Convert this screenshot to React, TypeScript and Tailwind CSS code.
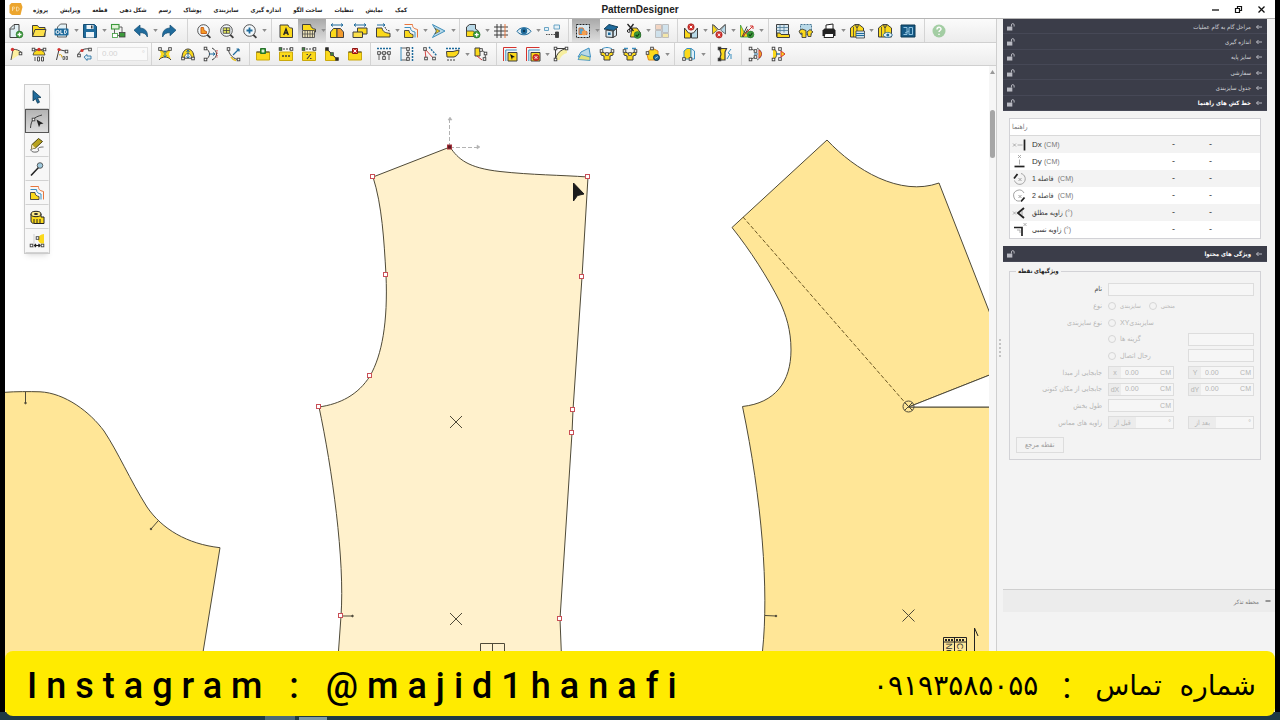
import { ReactNode, useState } from 'react'

type Tool = { icon: string; label: string; split?: boolean; on?: boolean; off?: boolean }
type ToolGroup = { tools: Tool[]; gap: string }

const Y = '#fbd91b'
const K = '#3f3f3f'
const B = '#1f6b9c'
const G = '#3c9a3c'
const R = '#d3332f'

const dot = (x: number, y: number, fill = '#fff') => (
  <rect key={`${x}-${y}`} x={x - 1.3} y={y - 1.3} width="2.6" height="2.6" fill={fill} stroke={K} strokeWidth="0.9" />
)

const plus = (x: number, y: number) => (
  <g>
    <circle cx={x} cy={y} r="3.4" fill={G} stroke="#26702a" strokeWidth="0.6" />
    <path d={`M${x - 2} ${y}h4M${x} ${y - 2}v4`} stroke="#fff" strokeWidth="1.3" />
  </g>
)

const check = (x: number, y: number) => (
  <g>
    <circle cx={x} cy={y} r="3.4" fill={G} stroke="#26702a" strokeWidth="0.6" />
    <path d={`M${x - 1.8} ${y}l1.4 1.5l2.2-2.8`} stroke="#123f14" fill="none" strokeWidth="1.1" />
  </g>
)

const cross = (x: number, y: number) => (
  <g>
    <circle cx={x} cy={y} r="3.2" fill={R} stroke="#9c1c1a" strokeWidth="0.6" />
    <path d={`M${x - 1.3} ${y - 1.3}l2.6 2.6m0-2.6l-2.6 2.6`} stroke="#fff" strokeWidth="1" />
  </g>
)

const lens = (
  <g>
    <path d="M11 11.5l3.4 3.4" stroke={K} strokeWidth="1.8" />
    <circle cx="7.5" cy="7.5" r="5.8" fill="#f3f8fb" stroke={K} strokeWidth="0.9" />
  </g>
)

const icons: Record<string, ReactNode> = {
  new: (
    <g>
      <path d="M2 14.5V5.5L6 1.5h5v13z" fill="#e3f1f6" stroke={K} />
      <path d="M2 6h4.3V1.7" fill="none" stroke={K} strokeWidth="0.8" />
      {plus(11.5, 11.5)}
    </g>
  ),
  open: (
    <g>
      <path d="M1.5 13.5V2.5h5l1.5 2h6v9z" fill={Y} stroke={K} />
      <path d="M1.5 13.5L4 6.5h11l-2 7z" fill="#fce04b" stroke={K} />
    </g>
  ),
  old: (
    <g>
      <path d="M3.5 14V4l3-3h6v13z" fill="#e3f1f6" stroke={K} strokeWidth="0.8" />
      <rect x="0.5" y="5.5" width="14" height="7" rx="1" fill={B} />
      <circle cx="3.6" cy="9" r="1.6" fill="none" stroke="#fff" />
      <path d="M6.8 7v3.6h2M10.6 7v3.6c2.6.3 2.6-3.9 0-3.6z" fill="none" stroke="#fff" strokeWidth="0.9" />
    </g>
  ),
  save: (
    <g>
      <path d="M1.5 1.5h11l2 2v11h-13z" fill={B} stroke="#164e73" />
      <path d="M4.5 2h7v4h-7z" fill="#eef5f9" />
      <path d="M9 2.5h1.5v3H9z" fill={K} />
      <path d="M4 9h8v5.5H4z" fill="#eef5f9" />
    </g>
  ),
  tree: (
    <g stroke={K} strokeWidth="0.8">
      <path d="M4.5 5.5v7h5M8 4h4v5" fill="none" />
      <rect x="1.5" y="1.5" width="7.5" height="4.5" fill="#e4f3da" stroke={G} strokeWidth="1.1" />
      <rect x="9.5" y="9.5" width="5.5" height="4.5" fill={G} />
      <rect x="2.5" y="10.5" width="5" height="4" fill="#fff" stroke={G} />
    </g>
  ),
  undo: <path d="M1 7.2L7 2v3c5 .2 8 3.2 7.4 9-1.4-3.2-3.7-4.4-7.4-4.3v3z" fill={B} stroke="#164e73" strokeWidth="0.7" />,
  redo: <path d="M15 7.2L9 2v3c-5 .2-8 3.2-7.4 9 1.4-3.2 3.7-4.4 7.4-4.3v3z" fill={B} stroke="#164e73" strokeWidth="0.7" />,
  zoomPiece: (
    <g>
      {lens}
      <path d="M5 10.5V4.5h2.5l.5 3 2.5 1v2z" fill="#f59a23" stroke="#c9631d" />
    </g>
  ),
  zoomAll: (
    <g>
      {lens}
      <path d="M4.2 4.8h6.6v5.5H4.2z" fill="#dfe35a" stroke={K} strokeWidth="0.8" />
      <path d="M4.2 7.5h6.6M7.5 4.8v5.5" stroke={K} strokeWidth="0.8" />
    </g>
  ),
  zoomIn: (
    <g>
      {lens}
      <path d="M4.5 7.5h6M7.5 4.5v6" stroke={B} strokeWidth="1.8" />
    </g>
  ),
  pieceA: (
    <g>
      <path d="M2 14.5V2h8c.5 2 1.5 3 4.500 3.200V14.500z" fill={Y} stroke={K} />
      <path d="M5.7 12L8 6l2.300 6M6.500 10h3" fill="none" stroke="#222" strokeWidth="1.400" />
    </g>
  ),
  calc: (
    <g>
      <path d="M1.5 7V1.5h8c.5 3 2 4.5 5 4.7V9H9" fill={Y} stroke={K} />
      <path d="M1.5 7.5h12v7h-12z" fill="#e9dfb6" stroke={K} strokeWidth="0.8" />
      <path d="M4 7.5v7M6.5 7.5v7M9 7.5v7M11.5 7.5v7M1.5 11h12" stroke={K} strokeWidth="0.7" />
    </g>
  ),
  mirror: (
    <g>
      <path d="M2 2h12M4 .5L2 2l2 1.5M12 .5L14 2l-2 1.5" fill="none" stroke={B} />
      <path d="M1.500 14.5V9l3-3.5H8v9z" fill={Y} stroke={K} />
      <path d="M14.500 14.5V9l-3-3.5H8v9z" fill="#f29b2e" stroke={K} />
    </g>
  ),
  move: (
    <g>
      <path d="M2 2h12M4 .5L2 2l2 1.5M12 .5L14 2l-2 1.5" fill="none" stroke={B} />
      <path d="M5.5 5h9.5v6H5.5z" fill={Y} stroke={K} />
      <path d="M1 9h9.5v5.5H1z" fill="#fce04b" stroke={K} />
    </g>
  ),
  extend: (
    <g>
      <path d="M2 2h8M8 .5L10 2 8 3.5" fill="none" stroke={B} />
      <path d="M1.5 14V5H7c.6 3.5 3 5 8 5.3V14z" fill={Y} stroke={K} />
      <path d="M10 4c.5 2.5 2 3.5 5 4" fill="none" stroke={K} strokeDasharray="1.5 1" />
    </g>
  ),
  seam: (
    <g fill="none">
      <path d="M1.5 1.5H9.5c0 3 1 4 5 5v8" stroke="#e7763d" />
      <path d="M1.5 4.500H7.500c0 3 1.500 4 4.500 4.500v5.500" stroke="#3b8fc0" />
      <path d="M1.5 14.500V7.500h4.500c0 2.500 1.500 3.500 4 4v3z" fill={Y} stroke={K} strokeWidth="0.900" />
    </g>
  ),
  chevron: (
    <g fill="none">
      <path d="M1.500 1.500L14 8 1.500 14.500l4-6.500z" fill="#b8d9e8" stroke="#3f8fbb" />
      <path d="M4 5.5L9 8l-5 2.8L5.5 8z" fill={Y} stroke={K} strokeWidth="0.6" />
    </g>
  ),
  addPiece: (
    <g>
      <path d="M1.5 13V4l3-2.5h6V6l3 2v5z" fill="#b8d9e8" stroke={K} />
      <path d="M1.5 13.5V8h7l2 3v2.5z" fill={Y} stroke={K} strokeWidth="0.8" />
      {plus(11.7, 11.7)}
    </g>
  ),
  grid: (
    <g fill="none" stroke={K}>
      <path d="M4 1v14M8 1v14M1 4h14M1 8h14M1 12h14" />
      <path d="M12 1v14" stroke="#e7763d" />
    </g>
  ),
  eye: (
    <g>
      <path d="M1 8.3C4 3.5 12 3.5 15 8.3 12 13 4 13 1 8.3z" fill="#dcebf3" stroke={B} />
      <circle cx="8" cy="8" r="3.2" fill={B} />
      <circle cx="8" cy="8" r="1.2" fill="#0d3853" />
    </g>
  ),
  link: (
    <g fill="none" stroke="#5b9cc0" strokeWidth="0.9">
      <path d="M0.5 4.5h4v3h-4zM10 2h5.500v4H10z" fill="#e5f1f7" />
      <path d="M2 11.500h9" stroke={K} strokeDasharray="1.5 1" />
      <path d="M11.500 9h3v5.500h-3z" fill={K} stroke={K} />
    </g>
  ),
  select: (
    <g>
      <rect x="1.5" y="1.5" width="13" height="13" fill="#d7e6ee" stroke="#222" strokeDasharray="2 1" />
      <path d="M4 11.5V5h4l1.5 3 2.5.8v2.7z" fill="#57a3cc" stroke="#e5722c" />
      <circle cx="9" cy="10" r="2.4" fill="#f6a04d" />
    </g>
  ),
  house: (
    <g>
      <path d="M1 6l5-4.5 9 2.5-4 3.5z" fill={B} stroke="#123f5c" />
      <path d="M3 7v7l7 .5V8zM10 8.5l3.5-3v7L10 14.5z" fill="#d6e7f0" stroke={K} />
      <path d="M5 9.5h2.6v2.5H5z" fill={B} />
    </g>
  ),
  cut: (
    <g>
      <path d="M4.5 14L6 5h5l3.5 5v4z" fill={Y} stroke={K} />
      <path d="M1.5 1l6 7M7.5 1L3 7" stroke="#222" strokeWidth="1.3" />
      <circle cx="2.8" cy="8" r="1.4" fill="none" stroke="#222" />
      {check(11.5, 12)}
    </g>
  ),
  layout: (
    <g stroke="#8b8b8b" strokeWidth="0.8">
      <path d="M1.5 1.5h6v5h-6z" fill="#f0bfa0" />
      <path d="M8.5 1.5h6v8h-6z" fill="#b9d7e8" />
      <path d="M1.5 7.5h6v7h-6z" fill="#b9d7e8" />
      <path d="M8.5 10.5h6v4h-6z" fill="#f5e07a" />
    </g>
  ),
  weld: (
    <g>
      <path d="M1.5 15V5l4 5h2v5z" fill={Y} stroke={K} />
      <path d="M14.5 15V5l-4 5h-2v5z" fill="#b8d9e8" stroke={K} />
      {cross(8, 4)}
    </g>
  ),
  unweld: (
    <g>
      <path d="M1.5 1.5L6.500 7 1.5 11z" fill={Y} stroke={K} strokeWidth="0.7" />
      <path d="M14.5 1.5L9.500 7l5 4z" fill="#b8d9e8" stroke={K} strokeWidth="0.7" />
      <path d="M2.5 1.5L8 7l6-5.5" fill="none" stroke={K} strokeWidth="0.8" />
      {cross(8, 11.8)}
    </g>
  ),
  compare: (
    <g fill="none">
      <path d="M1.500 14V2l3.500 7 8 5z" fill={Y} stroke={G} strokeWidth="0.8" />
      <path d="M3 14L8 3.5M4 14l5-8" stroke={K} />
      <path d="M4 13L14 3m0 0h-3m3 0v3" stroke={R} />
      {check(11.5, 11.5)}
    </g>
  ),
  marker: (
    <g>
      <path d="M1.5 1.5h12v12h-12z" fill="#d6e7f0" stroke={K} />
      <path d="M1.5 4.5h12M1.5 7.5h12M5 1.5v8M9 1.5v8" stroke="#4b7894" strokeWidth="0.8" />
      <path d="M2 14.5V10h3l1 1.5h8.5v3z" fill={Y} stroke={K} />
    </g>
  ),
  spread: (
    <g>
      <path d="M2.500 1.5h11v10h-11z" fill="#b8d9e8" stroke="#4b7894" strokeDasharray="2 1" />
      <path d="M1 8l3-2 4 1.500v7H4V10l-2 .5zM9 9l3-2.500 3 2.500-2 1.500v3h-3z" fill={Y} stroke={K} strokeWidth="0.9" />
    </g>
  ),
  print: (
    <g>
      <path d="M5 6V2l7-1v5" fill="#fff" stroke="#222" />
      <path d="M1.5 7.5l2-2H13l1.500 2V13h-13z" fill="#222" />
      <path d="M4 10.5h8.500v4H3z" fill="#fff" stroke="#222" />
    </g>
  ),
  jacketList: (
    <g>
      <path d="M1.5 14V5L6 1.500h4L14.500 5v9z" fill={Y} stroke={K} />
      <path d="M4.5 14V4M8 2v12M6 2l2 3 2-3" fill="none" stroke={K} strokeWidth="0.8" />
      <path d="M7 8h8.500v7H7z" fill="#cfe3ee" stroke={K} strokeWidth="0.8" />
      <path d="M7 10.500h8.500M7 12.500h8.500" stroke={B} />
    </g>
  ),
  jacketEye: (
    <g>
      <path d="M1.5 14V5L6 1.500h4L14.500 5v9z" fill={Y} stroke={K} />
      <path d="M4.5 14V4M8 2v12M6 2l2 3 2-3" fill="none" stroke={K} strokeWidth="0.8" />
      <path d="M6 12c2-3.500 7.500-3.500 9.500 0-2 3.200-7.500 3.200-9.500 0z" fill="#e8f2f7" stroke={B} strokeWidth="0.8" />
      <circle cx="10.8" cy="12" r="1.5" fill={B} />
    </g>
  ),
  threeD: (
    <g>
      <path d="M1 2h14v12H1z" fill="#165a86" stroke="#0d3853" />
      <path d="M3.5 4.5H7v7H3.5M9 4.500h3.500v7H9zM9 8l-4 2" fill="none" stroke="#8fc3e0" />
    </g>
  ),
  help: (
    <g opacity="0.6">
      <circle cx="8" cy="8" r="6.5" fill="#6fb56f" />
      <path d="M6 6.500c0-3 4-2.700 4-.5 0 1.500-2 1.500-2 3M8 10.700V12" fill="none" stroke="#fff" strokeWidth="1.5" />
    </g>
  ),
  corner: (
    <g>
      <path d="M3 14L5 3.500c3-.5 6 .5 9 3.500" fill="#fdf0a0" stroke={K} strokeWidth="0.9" />
      {dot(12.5, 7.5)}
      <circle cx="4.5" cy="3.5" r="1.7" fill={R} />
    </g>
  ),
  turn: (
    <g>
      <path d="M2 9C3 2 13 2 14 9z" fill={Y} stroke={K} strokeWidth="0.8" />
      <path d="M2 3.500h12" stroke={K} strokeWidth="0.8" />
      <circle cx="8" cy="3.500" r="1.700" fill={R} />
      {dot(2.500, 3.500)}
      {dot(13.500, 3.500)}
      <path d="M4 11v4M6.500 11h2v4h-2zM10.500 11h2v4h-2z" fill="none" stroke={K} strokeWidth="0.9" />
    </g>
  ),
  right: (
    <g>
      <path d="M2.5 14L5 3.500l8 2" fill="none" stroke={K} />
      <circle cx="5" cy="3.5" r="1.6" fill={R} />
      {dot(12.5, 5.5)}
      <path d="M5 9c2-1 3 0 3 2.500" fill="none" stroke="#d9a100" />
      <path d="M9 10.500h1.500v3H9zM12 10.500h1.500v3H12z" fill="none" stroke={K} strokeWidth="0.7" />
    </g>
  ),
  handle: (
    <g>
      <path d="M1 10c1-6 6-8 13-7" fill="none" stroke={K} />
      <circle cx="5" cy="4.5" r="1.6" fill={R} />
      {dot(2, 9.5)}
      {dot(13, 3.5)}
      <path d="M7 11l3-2.500V10h4v3h-4v1.500z" fill="#d8eaf4" stroke={B} strokeWidth="0.8" />
    </g>
  ),
  arcUp: (
    <g>
      <path d="M2 3c3 3 9 3 12 0l-2 5 2 6c-3-4-9-4-12 0l2-6z" fill={Y} />
      <path d="M2 3c3 3 9 3 12 0M2 14c3-4 9-4 12 0" fill="none" stroke={K} />
      {dot(3, 3)}
      {dot(13, 3)}
      <path d="M8 5v6M6.5 6.500L8 5l1.500 1.500M6.500 9.500L8 11l1.500-1.500" fill="none" stroke={B} />
    </g>
  ),
  arcBox: (
    <g>
      <path d="M2 12C2 0 14 0 14 12z" fill={Y} stroke={K} />
      <path d="M4.500 12c0-6 7-6 7 0z" fill="#fff" stroke={K} strokeWidth="0.700" />
      {dot(3, 12.5)}
      {dot(13, 12.5)}
      <path d="M8 4v8M6.5 6L8 4l1.500 2M6.500 10.500L8 12l1.500-1.500" fill="none" stroke={B} />
    </g>
  ),
  arcSide: (
    <g>
      <path d="M2 2c6 3 6 9 0 12M9 2c6 3 6 9 0 12" fill="none" stroke={K} />
      {dot(2.5, 2.5)}
      {dot(2.5, 13.5)}
      <path d="M6 8h6m-2-1.500L12 8l-2 1.500" fill="none" stroke={B} />
      <path d="M14 4v8" stroke={R} strokeDasharray="1.5 1" />
    </g>
  ),
  arcFree: (
    <g>
      <path d="M2 2c1 7 5 11 12 12" fill="none" stroke={K} />
      <path d="M7 9l6-6m0 0h-2.500M13 3v2.500" fill="none" stroke={B} strokeWidth="1.2" />
      {dot(2.5, 3)}
      {dot(12.5, 13.5)}
      <path d="M5 11c1 2 3 3 5 3.500" stroke="#e9c21a" fill="none" strokeWidth="1.5" />
    </g>
  ),
  ptAdd: (
    <g>
      <path d="M1.5 6h13v8h-13z" fill={Y} stroke="#c9a80d" />
      <path d="M1.5 6h13" stroke={K} />
      <path d="M5.5 2.500h5v5h-5z" fill={G} stroke="#26702a" />
      <path d="M8 3.500v3M6.500 5h3" stroke="#fff" strokeWidth="1.2" />
    </g>
  ),
  ptSpan: (
    <g>
      <path d="M1.5 6h13v8.500h-13z" fill={Y} stroke="#c9a80d" />
      <path d="M2 3h12" stroke={K} strokeDasharray="2 1" />
      {dot(2.5, 3, G)}
      {dot(13.5, 3)}
      <path d="M4 10h8" stroke={K} strokeDasharray="2 1" strokeWidth="1.5" />
    </g>
  ),
  ptPercent: (
    <g>
      <path d="M1.5 6h13v8.500h-13z" fill={Y} stroke="#c9a80d" />
      <path d="M2 3h12" stroke={K} strokeDasharray="2 1" />
      {dot(2.5, 3, G)}
      {dot(13.5, 3)}
      <path d="M6 13l4-5M5.500 8.500H7M9 12.500h1.500" stroke={K} strokeWidth="1.2" />
    </g>
  ),
  ptLine: (
    <g>
      <path d="M1.5 14.500V2.500l12 12z" fill={Y} stroke="#c9a80d" />
      <path d="M2 2l12 12" stroke={K} />
      {dot(3, 3, '#222')}
      {dot(8, 8, G)}
      {dot(13, 13, '#222')}
    </g>
  ),
  ptDel: (
    <g>
      <path d="M1.5 6h13v8h-13z" fill={Y} stroke="#c9a80d" />
      <path d="M1.5 6h13" stroke={K} />
      <path d="M5.5 2.500h5v5h-5z" fill={R} stroke="#8d1714" />
      <path d="M6.5 3.500l3 3m0-3l-3 3" stroke="#fff" />
    </g>
  ),
  alignH: (
    <g>
      <path d="M1 2.500h14" stroke={B} strokeWidth="1.5" strokeDasharray="2 1" />
      <path d="M2 7h12M3 7v7M8 7v7M13 7v7" stroke={K} strokeWidth="0.8" />
      {dot(3, 7)}
      {dot(8, 7)}
      {dot(13, 7)}
      {dot(8, 12)}
    </g>
  ),
  alignV: (
    <g>
      <path d="M13.5 1v14" stroke={B} strokeWidth="1.5" strokeDasharray="2 1" />
      <path d="M2 2h7v12H2" fill="none" stroke={K} strokeWidth="0.8" />
      {dot(9, 3)}
      {dot(9, 8)}
      {dot(9, 13)}
      <path d="M2 1v14" stroke="#3b8fc0" />
    </g>
  ),
  alignD: (
    <g>
      <path d="M7 1l8 9" stroke={B} strokeWidth="1.3" strokeDasharray="2 1" />
      <path d="M3 3l1 10M3 3l9 10" stroke={R} strokeWidth="0.9" />
      {dot(3, 3)}
      {dot(4, 12.5)}
      {dot(12, 12.5)}
    </g>
  ),
  straighten: (
    <g>
      <path d="M1 2.500h14" stroke={B} strokeWidth="1.3" strokeDasharray="2 1" />
      <path d="M1.5 5.500H8L14 4c0 4-2 6-5 7H2z" fill={Y} stroke={K} />
      <path d="M2 14h9" stroke={K} strokeDasharray="2 1" />
    </g>
  ),
  rotatePt: (
    <g>
      <path d="M2 2h5v8H2z" fill={Y} stroke={K} />
      <path d="M8 4c4 1 5 4 4 9" fill="none" stroke={K} strokeWidth="0.9" />
      {dot(8, 4)}
      {dot(12.5, 7.5)}
      {dot(11.5, 13)}
      <path d="M4 10l5 4" stroke={R} />
    </g>
  ),
  layer: (
    <g fill="none">
      <path d="M1.5 15V1.500h13" stroke={R} />
      <path d="M3.8 15V4h11" stroke="#3b8fc0" />
      <path d="M6 15V6.500h9V15z" fill={Y} stroke={K} />
      <path d="M8 8l5 3-2.500.5L10 14z" fill="#111" />
    </g>
  ),
  layerDel: (
    <g fill="none">
      <path d="M1.5 15V1.500h13" stroke={R} />
      <path d="M3.8 15V4h11" stroke="#3b8fc0" />
      <path d="M6 15V6.500h9V15z" fill={Y} stroke={K} />
      {cross(11, 11.5)}
    </g>
  ),
  fillet: (
    <g>
      <path d="M2.5 14C3 7 7 3 14 2.500V7c-4 1-6 3-7.500 7z" fill="#f6eea0" />
      <path d="M2.5 2.500H13M2.500 2.500V14M2.500 14C3 8 8 3 14 2.500" fill="none" stroke={K} />
      {dot(2.5, 2.5)}
      {dot(13.5, 2.5)}
      {dot(2.5, 13.5)}
    </g>
  ),
  skew: (
    <g>
      <path d="M2 11l3-5 8-4 1.500 9z" fill="#b8d9e8" stroke="#3b8fc0" />
      <path d="M2 13.500L5 8.500l9 2.500v3.500z" fill="#e3e27a" stroke="#3b8fc0" strokeWidth="0.8" />
    </g>
  ),
  joinA: (
    <g>
      <path d="M2 5l6 3.500L14 5v4l-3 1v4H5v-4L2 9z" fill={Y} stroke={K} />
      <path d="M3 3c3-2 7-2 10 0" fill="none" stroke="#3b8fc0" />
      {dot(2.5, 5)}
      {dot(13.5, 5)}
      {dot(8, 8)}
    </g>
  ),
  joinB: (
    <g>
      <path d="M2 5l6 3.500L14 5v4l-3 1v4H5v-4L2 9z" fill={Y} stroke={K} />
      <path d="M2 2.500h4M10 2.500h4" stroke="#3b8fc0" strokeWidth="1.3" />
      {dot(2.5, 5)}
      {dot(13.5, 5)}
      {dot(8, 8)}
    </g>
  ),
  pieceInfo: (
    <g>
      <path d="M1.500 7L7 2l6 3v9H3.500z" fill={Y} stroke="#e08a1e" />
      <circle cx="11.5" cy="11.5" r="3" fill={B} stroke="#0d3853" />
      <path d="M10 12.500l3-2" stroke="#9fd0e8" />
      {dot(7, 2.5)}
      {dot(2.5, 7)}
    </g>
  ),
  fold: (
    <g>
      <path d="M3 13V5l3-2.500h4V13z" fill={Y} stroke="#3b8fc0" />
      <path d="M10 13V2.500l3.500 2.500v8z" fill="#dff0f7" stroke="#3b8fc0" />
      {dot(3, 13)}
      {dot(9.500, 13)}
    </g>
  ),
  dart: (
    <g>
      <path d="M2.5 2.500h7L8 6v8H2.500L4 8z" fill={Y} stroke={K} strokeWidth="1.2" />
      {dot(2.5, 2.5, '#222')}
      {dot(2.5, 13.5, '#222')}
      <path d="M14 3l-3 4 2 1-3 5M14 8v5" fill="none" stroke="#3b8fc0" />
    </g>
  ),
  splitPt: (
    <g>
      <path d="M2 2l5 3M2 14l5-3M9 2c6 3 6 9 0 12" fill="none" stroke={K} strokeWidth="0.8" />
      {dot(2.5, 2.5)}
      {dot(7.5, 5)}
      {dot(2.5, 13.5)}
      {dot(7.5, 11)}
      <path d="M6 8h4" stroke={B} />
      <path d="M11 4c3 2 3 6 0 8z" fill={Y} stroke={R} />
    </g>
  ),
  mergePt: (
    <g>
      <path d="M2 2c5 3 5 9 0 12" fill={Y} stroke={K} strokeWidth="0.8" />
      {dot(2.5, 2.5)}
      {dot(2.5, 13.5)}
      <path d="M5 8h4" stroke={B} strokeWidth="1.3" />
      <path d="M10 5l4 3-4 3z" fill={Y} stroke={R} />
      {dot(9, 3)}
      {dot(9, 13)}
    </g>
  ),
  arrow: <path d="M4 1.500l8 7-3.500.2 2 4.500-2 1-2-4.500L4 12z" fill={B} stroke="#0d3853" strokeWidth="0.8" />,
  node: (
    <g>
      <path d="M1.5 15C2 7 5 4 13 2" fill="none" stroke={K} />
      {dot(4.5, 6.5)}
      <path d="M7.5 6.500l7 4-3.200.8-1.300 3z" fill="#222" />
    </g>
  ),
  pencil: (
    <g>
      <path d="M3 7.500L9.500 1.500l4 3-7 6.500-4 1z" fill="#b8a21c" stroke="#4a4210" />
      <path d="M3 7.500l3.500 3.500-4 1z" fill="#f3e3b5" />
      <path d="M2 12c-1 4.500 9 3.500 7.500 1s2-3 5-3" fill="none" stroke={K} strokeWidth="0.8" />
    </g>
  ),
  pin: (
    <g>
      <path d="M2 14.500L10 6" stroke="#222" strokeWidth="1.5" />
      <circle cx="11" cy="4.5" r="2.8" fill="#9fc9dd" stroke={K} strokeWidth="0.8" />
    </g>
  ),
  tape: (
    <g>
      <path d="M2 5v7c0 2 2 2.500 4 2.500h9V8h-3V5z" fill={Y} stroke="#222" />
      <ellipse cx="7" cy="5" rx="5" ry="2.7" fill="#fce98a" stroke="#222" />
      <ellipse cx="7" cy="5" rx="2" ry="0.9" fill="#222" />
      <path d="M5 10v4M8 10v4M11 10v4" stroke="#222" />
    </g>
  ),
  measure: (
    <g>
      <path d="M15 1c-7 1-8 7-3 9.500h3z" fill={Y} />
      <path d="M5 1v14" stroke="#bbb" strokeWidth="0.6" />
      {dot(8.5, 5)}
      {dot(2.5, 12.5)}
      {dot(13.5, 12.5)}
      <path d="M5.5 12.500h5M7 11l-1.500 1.500L7 14M9.500 11l1.500 1.500L9.500 14" fill="none" stroke="#222" strokeWidth="1.2" />
    </g>
  ),
  gx: (
    <g fill="none" stroke="#999">
      <path d="M1 6.500l3 3m0-3l-3 3M5.500 8h5" strokeWidth="0.8" />
      <path d="M12.5 2.500v11" stroke="#222" strokeWidth="1.7" />
    </g>
  ),
  gy: (
    <g fill="none" stroke="#999">
      <path d="M6 1l3 3m0-3L6 4M7.500 5.500v5" strokeWidth="0.8" />
      <path d="M2.5 12.500h10" stroke="#222" strokeWidth="1.7" />
    </g>
  ),
  d1: (
    <g fill="none" stroke="#999">
      <path d="M9 2.500a5.500 5.500 0 1 1-6.500 7M6.500 7l3 3m0-3l-3 3" strokeWidth="0.9" />
      <path d="M2 7.500L5.500 3" stroke="#222" strokeWidth="1.8" />
    </g>
  ),
  d2: (
    <g fill="none" stroke="#999">
      <path d="M12 5a5.500 5.500 0 1 0-4 8M6.500 7l3 3m0-3l-3 3" strokeWidth="0.9" />
      <path d="M9 13.500l3.500-4" stroke="#222" strokeWidth="1.8" />
    </g>
  ),
  a1: (
    <g fill="none" stroke="#999">
      <path d="M1 6.500l3 3m0-3l-3 3" strokeWidth="0.8" />
      <path d="M12 3L6 8l6 5" stroke="#222" strokeWidth="1.9" />
      <path d="M10 6v4" />
    </g>
  ),
  a2: (
    <g fill="none" stroke="#999">
      <path d="M2 5.500h8V14" stroke="#222" strokeWidth="1.7" />
      <path d="M11.5 1l3 3m0-3l-3 3M5 8h3v3" strokeWidth="0.8" />
    </g>
  ),
}

const mainTools: ToolGroup[] = [
  {
    gap: 'w-3',
    tools: [
      { icon: 'new', label: 'New' },
      { icon: 'open', label: 'Open' },
      { icon: 'old', label: 'Open old format', split: true },
      { icon: 'save', label: 'Save', split: true },
      { icon: 'tree', label: 'Structure' },
      { icon: 'undo', label: 'Undo', split: true },
      { icon: 'redo', label: 'Redo' },
    ],
  },
  {
    gap: 'w-2',
    tools: [
      { icon: 'zoomPiece', label: 'Zoom piece' },
      { icon: 'zoomAll', label: 'Zoom all' },
      { icon: 'zoomIn', label: 'Zoom in', split: true },
    ],
  },
  {
    gap: 'w-1.5',
    tools: [
      { icon: 'pieceA', label: 'Piece name' },
      { icon: 'calc', label: 'Measurements', split: true, on: true },
      { icon: 'mirror', label: 'Mirror' },
      { icon: 'move', label: 'Move' },
      { icon: 'extend', label: 'Extend', split: true },
      { icon: 'seam', label: 'Seam', split: true },
      { icon: 'chevron', label: 'Notch', split: true },
    ],
  },
  {
    gap: 'w-2',
    tools: [
      { icon: 'addPiece', label: 'Add piece', split: true },
      { icon: 'grid', label: 'Grid' },
      { icon: 'eye', label: 'View', split: true },
      { icon: 'link', label: 'Link' },
    ],
  },
  {
    gap: 'w-1.5',
    tools: [
      { icon: 'select', label: 'Selection', split: true, on: true },
      { icon: 'house', label: 'Home' },
      { icon: 'cut', label: 'Cut', split: true },
      { icon: 'layout', label: 'Layout', off: true },
    ],
  },
  {
    gap: 'w-2',
    tools: [
      { icon: 'weld', label: 'Weld', split: true },
      { icon: 'unweld', label: 'Unweld', split: true },
      { icon: 'compare', label: 'Compare', split: true },
    ],
  },
  {
    gap: 'w-2',
    tools: [
      { icon: 'marker', label: 'Marker' },
      { icon: 'spread', label: 'Spread' },
      { icon: 'print', label: 'Print', split: true },
      { icon: 'jacketList', label: 'Garment list', split: true },
      { icon: 'jacketEye', label: 'Garment preview' },
      { icon: 'threeD', label: '3D' },
    ],
  },
  { gap: '', tools: [{ icon: 'help', label: 'Help' }] },
]

const curveTools: Tool[] = [
  { icon: 'corner', label: 'Corner point' },
  { icon: 'turn', label: 'Angle 180' },
  { icon: 'right', label: 'Angle 90' },
  { icon: 'handle', label: 'Free handle' },
]

const pointTools: ToolGroup[] = [
  {
    gap: 'w-1.5',
    tools: [
      { icon: 'arcUp', label: 'Raise arc' },
      { icon: 'arcBox', label: 'Box arc' },
      { icon: 'arcSide', label: 'Side arc' },
      { icon: 'arcFree', label: 'Free arc' },
    ],
  },
  {
    gap: 'w-1.5',
    tools: [
      { icon: 'ptAdd', label: 'Add point' },
      { icon: 'ptSpan', label: 'Point at distance' },
      { icon: 'ptPercent', label: 'Point at percent' },
      { icon: 'ptLine', label: 'Divide' },
      { icon: 'ptDel', label: 'Delete point' },
    ],
  },
  {
    gap: 'w-1.5',
    tools: [
      { icon: 'alignH', label: 'Align horizontally' },
      { icon: 'alignV', label: 'Align vertically' },
      { icon: 'alignD', label: 'Align diagonally' },
      { icon: 'straighten', label: 'Straighten', split: true },
      { icon: 'rotatePt', label: 'Rotate point' },
    ],
  },
  {
    gap: 'w-2',
    tools: [
      { icon: 'layer', label: 'Select layer' },
      { icon: 'layerDel', label: 'Delete layer', split: true },
      { icon: 'fillet', label: 'Fillet' },
      { icon: 'skew', label: 'Skew' },
      { icon: 'joinA', label: 'Join round' },
      { icon: 'joinB', label: 'Join flat' },
      { icon: 'pieceInfo', label: 'Piece info', split: true },
    ],
  },
  { gap: 'w-2', tools: [{ icon: 'fold', label: 'Fold', split: true }] },
  { gap: 'w-2', tools: [{ icon: 'dart', label: 'Dart' }] },
  {
    gap: '',
    tools: [
      { icon: 'splitPt', label: 'Split point' },
      { icon: 'mergePt', label: 'Merge point' },
    ],
  },
]

const sideTools: Tool[] = [
  { icon: 'arrow', label: 'Select' },
  { icon: 'node', label: 'Edit nodes' },
  { icon: 'pencil', label: 'Draw' },
  { icon: 'pin', label: 'Pin' },
  { icon: 'seam', label: 'Seam allowance' },
  { icon: 'tape', label: 'Tape' },
  { icon: 'measure', label: 'Measure' },
]

const menus = ['پروژه', 'ویرایش', 'قطعه', 'شکل دهی', 'رسم', 'پوشاک', 'سایزبندی', 'اندازه گیری', 'ساخت الگو', 'تنظیات', 'نمایش', 'کمک']

const sections = ['مراحل گام به گام عملیات', 'اندازه گیری', 'سایز پایه', 'سفارشی', 'جدول سایزبندی', 'خط کش های راهنما']

const guides = [
  { icon: 'gx', name: 'Dx', unit: '(CM)' },
  { icon: 'gy', name: 'Dy', unit: '(CM)' },
  { icon: 'd1', name: '1 فاصله', unit: '\u00a0(CM)' },
  { icon: 'd2', name: '2 فاصله', unit: '\u00a0(CM)' },
  { icon: 'a1', name: 'زاویه مطلق', unit: '(°)' },
  { icon: 'a2', name: 'زاویه نسبی', unit: '(°)' },
]

const nodes = [
  [373, 177], [588, 177], [386, 275], [582, 277], [370, 376], [319, 407],
  [573, 410], [572, 433], [341, 616], [560, 619],
]

function Icon({ name }: { name: string }) {
  return (
    <svg viewBox="0 0 16 16" className="size-4 shrink-0" aria-hidden="true">
      {icons[name]}
    </svg>
  )
}

function ToolButton({ tool }: { tool: Tool }) {
  return (
    <button
      type="button"
      aria-label={tool.label}
      className={`flex h-full items-center pl-[3px] ${tool.split ? 'w-7' : 'w-[23px]'} ${tool.on ? 'bg-linear-to-b from-[#a9a9a9] to-[#dedede]' : ''} ${tool.off ? 'opacity-60' : ''}`}
    >
      <Icon name={tool.icon} />
      {tool.split && (
        <svg viewBox="0 0 6 4" className="ml-1 h-[3px] w-[5px] shrink-0">
          <path d="M0 0h6L3 4z" fill="#8d8d8d" />
        </svg>
      )}
    </button>
  )
}

function Groups({ groups }: { groups: ToolGroup[] }) {
  return groups.map((group, i) => (
    <div key={i} className="flex h-full items-center">
      {group.tools.map((tool) => (
        <ToolButton key={tool.icon} tool={tool} />
      ))}
      {group.gap && (
        <div className={`flex h-full justify-center ${group.gap}`}>
          <div className="h-full w-px bg-[#d4d4d4]" />
        </div>
      )}
    </div>
  ))
}

function Lock() {
  return (
    <svg viewBox="0 0 9 9" className="size-2 shrink-0">
      <path d="M0 4h6v4.500H0z" fill="#b9bac2" />
      <path d="M5 4V2.200a1.500 1.500 0 0 1 3 0V4" fill="none" stroke="#b9bac2" strokeWidth="1.1" />
    </svg>
  )
}

function SectionBar({ title, bold }: { title: string; bold?: boolean }) {
  return (
    <button
      type="button"
      className="flex w-full items-center border-b border-[#464856] bg-[#3b3d49] px-1 pt-px text-[6px] leading-[14px] text-[#d5d6db]"
    >
      <Lock />
      <span dir="rtl" className={`ml-auto ${bold ? 'font-bold text-white' : ''}`}>{title}</span>
      <svg viewBox="0 0 8 6" className="ml-1 h-1.5 w-2">
        <path d="M7 3H1.500M3.500 1l-2 2 2 2" fill="none" stroke="#b9bac2" />
      </svg>
    </button>
  )
}

function Cross({ x, y, r = 6 }: { x: number; y: number; r?: number }) {
  return <path d={`M${x - r} ${y - r}L${x + r} ${y + r}M${x + r} ${y - r}L${x - r} ${y + r}`} />
}

function Canvas() {
  return (
    <svg className="absolute inset-0 size-full" aria-label="Pattern pieces">
      <g transform="translate(-5 -66)" fill="none" stroke="#4f4a38" strokeWidth="1">
        <path
          d="M5 392.3C15 391.5 30 391.5 40 391.8C65 393 90 412 104 431C118 452 130 480 147 507C162 529 187 544 220 547.7L192 720H-5V392z"
          fill="#ffe697"
        />
        <path d="M25.5 392v11M158 521l-7 8" />
        <circle cx="25.5" cy="403" r="0.8" fill="#333" />
        <circle cx="151" cy="529" r="0.8" fill="#333" />

        <path
          d="M450 147C458 159 468 168 500 171.5S560 175 588 177L582 277L573 410L572 433L560 619L564 720H334L338.5 651L341 616C345 560 332 468 319 407C340 404 358 395 370 376C382 355 388 322 386 275C384 240 382 205 373 177z"
          fill="#fff1cc"
        />
        <path d="M449.5 147V119M450 147.5H478" stroke="#b3b3b3" strokeDasharray="4 2" />
        <path d="M448 120l2-3 2 3zM477 145l3 2-3 2z" fill="#b3b3b3" stroke="#b3b3b3" strokeWidth="0.5" />
        <path d="M341 616h12" />
        <circle cx="352.5" cy="616" r="0.8" fill="#333" />
        <Cross x={456} y={422} />
        <Cross x={456} y={619} />
        <path d="M480.5 720V643.5h24V720M492.5 643.5V720" />
        {nodes.map(([x, y]) => (
          <rect key={`${x}-${y}`} x={x - 2.5} y={y - 2.5} width="4" height="4" fill="#fff" stroke="#c94f57" />
        ))}
        <rect x="447.5" y="145" width="4" height="4" fill="#5e1a22" stroke="#a8323c" />

        <path
          d="M827 140C855 170 900 197 939 183L989 311L1020 390V363L908.5 407H1020V720H757L762.5 651C769 590 762 500 742.5 406.5C775 403 791 382 791 350C791 330 786 315 780 302C768 278 750 250 732 227.5z"
          fill="#ffe697"
        />
        <path d="M743 217L908 406" stroke="#6b5723" strokeDasharray="4 2" />
        <path d="M908.5 407L1020 363V407z" fill="#fff" />
        <circle cx="908.5" cy="406.5" r="5.5" />
        <Cross x={908.5} y={406.5} r={4} />
        <path d="M765 615.5l11 .5" />
        <circle cx="776" cy="616" r="0.8" fill="#333" />
        <Cross x={908.5} y={615.5} />
        <path d="M943.5 720V637.5h23V720M954.5 637.5V720M943.5 642h23M974.5 720V628l3.500 8" stroke="#222" />
        <path d="M945 640h8M956 640h9" stroke="#222" strokeWidth="2" strokeDasharray="2 1" />
        <g className="font-['Liberation_Sans'] text-[9px]" fill="#333" stroke="none">
          <text transform="translate(946 643) rotate(90)">Nu</text>
          <text transform="translate(957 643) rotate(90)">Co</text>
        </g>

        <path d="M573.5 183v18l4-5.500 6.500-1.500z" fill="#1c1c1c" stroke="#1c1c1c" />
      </g>
    </svg>
  )
}

const fieldBox = 'h-[13px] min-w-0 border border-[#dddddd] bg-[#f6f6f6]'

function Measure({ id, prefix, unit, value, wide }: { id: string; prefix?: string; unit: string; value?: string; wide?: boolean }) {
  return (
    <div className={`flex items-center ${fieldBox}`}>
      {prefix && (
        <label htmlFor={id} className={`self-stretch bg-[#ececec] text-center leading-[11px] ${wide ? 'w-[27px]' : 'w-3'}`}>
          {prefix}
        </label>
      )}
      <input id={id} aria-label={prefix ?? 'طول بخش'} defaultValue={value} disabled className="w-0 min-w-0 flex-1 bg-transparent pl-1" />
      <span className="pr-0.5">{unit}</span>
    </div>
  )
}

function Radio({ name, label }: { name: string; label: string }) {
  return (
    <label className="flex items-center gap-1">
      <input type="radio" name={name} disabled className="size-2 appearance-none rounded-full border border-[#d6d6d6]" />
      <span>{label}</span>
    </label>
  )
}

function FormRow({ label, children }: { label?: string; children: ReactNode }) {
  return (
    <div className="grid grid-cols-[86px_1fr] items-center gap-1.5">
      <span className="text-right">{label}</span>
      {children}
    </div>
  )
}

function PointForm() {
  return (
    <fieldset className="mx-1.5 mt-[3px] border border-[#d2d2d6] px-1.5 pb-1.5 font-['Liberation_Sans','DejaVu_Sans_Condensed','DejaVu_Sans',sans-serif] text-[7px] leading-3 text-[#b5b5b5]">
      <legend className="px-0.5 text-[6px] font-bold text-[#222]">ویژگیهای نقطه</legend>
      <div className="mt-1 grid h-[150px] grid-rows-9 items-center">
        <div className="grid grid-cols-[86px_1fr] items-center gap-1.5">
          <label htmlFor="point-name" className="text-right text-[#444]">نام</label>
          <input id="point-name" className={fieldBox} />
        </div>
        <FormRow label="نوع">
          <div className="flex gap-2 text-[6px]">
            <Radio name="kind" label="سایزبندی" />
            <Radio name="kind" label="منحنی" />
          </div>
        </FormRow>
        <FormRow label="نوع سایزبندی">
          <Radio name="grading" label="XYسایزبندی" />
        </FormRow>
        <FormRow>
          <div className="grid grid-cols-2 items-center gap-3.5">
            <Radio name="grading" label="گزینه ها" />
            <input aria-label="گزینه ها" disabled className={fieldBox} />
          </div>
        </FormRow>
        <FormRow>
          <div className="grid grid-cols-2 items-center gap-3.5">
            <Radio name="grading" label="رحال اتصال" />
            <input aria-label="رحال اتصال" disabled className={fieldBox} />
          </div>
        </FormRow>
        <FormRow label="جابجایی از مبدا">
          <div className="grid grid-cols-2 gap-3.5">
            <Measure id="pos-x" prefix="x" unit="CM" value="0.00" />
            <Measure id="pos-y" prefix="Y" unit="CM" value="0.00" />
          </div>
        </FormRow>
        <FormRow label="جابجایی از مکان کنونی">
          <div className="grid grid-cols-2 gap-3.5">
            <Measure id="delta-x" prefix="dX" unit="CM" value="0.00" />
            <Measure id="delta-y" prefix="dY" unit="CM" value="0.00" />
          </div>
        </FormRow>
        <FormRow label="طول بخش">
          <div className="grid grid-cols-2 gap-3.5">
            <Measure id="segment" unit="CM" />
          </div>
        </FormRow>
        <FormRow label="زاویه های مماس">
          <div className="grid grid-cols-2 gap-3.5">
            <Measure id="angle-before" prefix="قبل از" unit="°" wide />
            <Measure id="angle-after" prefix="بعد از" unit="°" wide />
          </div>
        </FormRow>
      </div>
      <button type="button" disabled className="mt-1.5 border border-[#dddddd] px-2 leading-[14px] text-[#999]">
        نقطه مرجع
      </button>
    </fieldset>
  )
}

function GuideTable() {
  return (
    <table className="w-full border-separate border-spacing-0 border border-[#d2d2d6] bg-white font-['Liberation_Sans','DejaVu_Sans_Condensed','DejaVu_Sans',sans-serif] text-[9px] text-[#777]">
      <thead>
        <tr className="h-[17px]">
          <th colSpan={3} className="border-b border-[#d9d9d9] px-0.5 text-left text-[7px] font-normal text-[#777]">راهنما</th>
        </tr>
      </thead>
      <tbody>
        {guides.map((guide) => (
          <tr key={guide.icon} className="h-[17px] odd:bg-[#f3f3f3]">
            <td className="p-0">
              <div className="flex items-center gap-1 pl-0.5 text-[8px] leading-3">
                <Icon name={guide.icon} />
                <span>
                  <span className={guide.name.startsWith('D') ? 'text-[#333]' : 'text-[7px] text-[#333]'}>{guide.name}</span>
                  {' '}
                  <bdi className="text-[7px]">{guide.unit}</bdi>
                </span>
              </div>
            </td>
            <td className="w-[37px] p-0 text-left text-[#333]">-</td>
            <td className="w-[51px] p-0 text-left text-[#333]">-</td>
          </tr>
        ))}
      </tbody>
    </table>
  )
}

function App() {
  const [activeTool, setActiveTool] = useState('node')
  const [angle, setAngle] = useState('0.00')

  return (
    <div className="relative flex min-h-screen flex-col bg-black px-[5px] font-['DejaVu_Sans_Condensed','DejaVu_Sans',sans-serif]">
      <header className="grid h-[19px] grid-cols-[1fr_auto_1fr] items-center border-b border-[#b5b5b5] bg-white">
        <nav className="flex items-center text-[6px] font-bold text-[#222]">
          <svg viewBox="0 0 14 14" className="ml-1 size-3.5">
            <path d="M2.5 1H12l1.500 4-2 8H3L.5 11V3z" fill="#eca52e" />
            <path d="M3.500 9V5c3-.5 3 2.200 0 2M7.500 9V5c3.500 0 3.500 4 0 4z" fill="none" stroke="#fbe3b5" strokeWidth="0.8" />
          </svg>
          <div className="ml-2.5 flex gap-3">
            {menus.map((item) => (
              <button key={item} type="button">{item}</button>
            ))}
          </div>
        </nav>
        <h1 className="font-['Liberation_Sans'] text-[10px] font-bold text-[#222]">PatternDesigner</h1>
        <div className="flex justify-end gap-3 pr-2">
          <button type="button" aria-label="Minimize">
            <svg viewBox="0 0 11 11" className="size-[11px]"><path d="M2 6h7" stroke="#111" strokeWidth="1.3" /></svg>
          </button>
          <button type="button" aria-label="Restore">
            <svg viewBox="0 0 11 11" className="size-[11px]">
              <path d="M2.5 4.500h4v4h-4zM4.500 4V2.500h4v4H7" fill="none" stroke="#111" strokeWidth="1.2" />
            </svg>
          </button>
          <button type="button" aria-label="Close">
            <svg viewBox="0 0 11 11" className="size-[11px]"><path d="M2.5 2.500l6 6m0-6l-6 6" stroke="#111" strokeWidth="1.3" /></svg>
          </button>
        </div>
      </header>

      <div className="flex flex-1 bg-[#f3f3f3]">
        <main className="flex flex-1 flex-col border-r border-[#cfcfcf]">
          <div className="flex h-6 items-center border-b border-[#d0d0d0] bg-linear-to-b from-[#fbfbfb] to-[#ececec]">
            <Groups groups={mainTools} />
          </div>
          <div className="flex h-[23px] items-center border-b border-[#d0d0d0] bg-linear-to-b from-[#fbfbfb] to-[#ececec]">
            {curveTools.map((tool) => (
              <ToolButton key={tool.icon} tool={tool} />
            ))}
            <div className="flex h-[14px] w-[51px] items-center border border-[#e2e2e2] bg-[#fafafa] font-['Liberation_Sans'] text-[8px] text-[#d4d4d4]">
              <input
                aria-label="Angle"
                value={angle}
                onChange={(e) => setAngle(e.target.value)}
                className="w-0 min-w-0 flex-1 bg-transparent pl-1"
              />
              <span className="pr-0.5">°</span>
            </div>
            <div className="flex h-full w-1.5 justify-center">
              <div className="h-full w-px bg-[#d4d4d4]" />
            </div>
            <Groups groups={pointTools} />
          </div>

          <div className="flex flex-1">
            <div className="relative flex-1 overflow-hidden bg-white">
              <Canvas />
              <div className="absolute top-[19px] left-5 flex w-6 flex-col bg-[#f7f7f7] shadow-md ring-1 ring-[#cccccc]">
                {sideTools.map((tool) => (
                  <button
                    key={tool.icon}
                    type="button"
                    aria-label={tool.label}
                    aria-pressed={activeTool === tool.icon}
                    onClick={() => setActiveTool(tool.icon)}
                    className={`flex h-6 items-center justify-center border ${activeTool === tool.icon ? 'border-[#555] bg-linear-to-b from-[#b4b4b4] to-[#dcdcdc]' : 'border-transparent border-b-[#d2d2d2]'}`}
                  >
                    <Icon name={tool.icon} />
                  </button>
                ))}
              </div>
            </div>
            <div className="w-[7px] bg-[#f6f6f6] px-px pt-1">
              <svg viewBox="0 0 5 4" className="h-1 w-[5px]"><path d="M0 4h5L2.500 0z" fill="#999" /></svg>
              <div className="mt-9 h-12 rounded-full bg-[#a6a6a6]" />
            </div>
          </div>
        </main>

        <div className="flex w-1.5 flex-col items-center gap-0.5 pt-[320px]">
          {[0, 1, 2, 3, 4].map((n) => (
            <i key={n} className="h-0.5 w-0.5 bg-[#c4c4c4]" />
          ))}
        </div>

        <aside className="w-[272px]">
          <div className="mr-2 grid h-[92px] grid-rows-6">
            {sections.map((title, i) => (
              <SectionBar key={title} title={title} bold={i === 5} />
            ))}
          </div>
          <div className="mr-2 px-1.5 pt-[7px] pb-[7px]">
            <GuideTable />
          </div>
          <div className="mr-2">
            <SectionBar title="ویژگی های محتوا" bold />
            <PointForm />
          </div>
          <div className="mt-[129px] flex h-[23px] items-center justify-end gap-1.5 border-t border-[#cfcfcf] bg-[#ececec] pr-1 text-[6px] text-[#777]">
            <span>محطه تذکر</span>
            <svg viewBox="0 0 6 6" className="size-1.5"><path d="M0.5 3h5" stroke="#777" strokeWidth="1.5" /></svg>
          </div>
        </aside>
      </div>

      <footer className="-mx-[5px] flex h-2 items-end bg-[#1e3a44] pl-[265px]">
        <div className="h-1 w-[30px] bg-[#4c6a76]" />
        <div className="ml-1 h-[3px] w-7 bg-[#7d9aa6]" />
      </footer>

      <div className="absolute inset-x-[5px] bottom-1 flex h-[65px] items-center justify-between rounded-lg bg-[#ffeb00] pt-1 pr-[19px] pl-[22px] text-black">
        <p className="font-['Roboto'] text-[36px] font-medium tracking-[9px]">Instagram : @majid1hanafi</p>
        <p dir="rtl" className="flex items-center gap-6 font-['DejaVu_Sans'] text-[28px]">
          <span>شماره&nbsp; تماس</span>
          <span className="font-['Roboto'] text-[36px]">:</span>
          <span>۰۹۱۹۳۵۸۵۰۵۵</span>
        </p>
      </div>
    </div>
  )
}

export default App
